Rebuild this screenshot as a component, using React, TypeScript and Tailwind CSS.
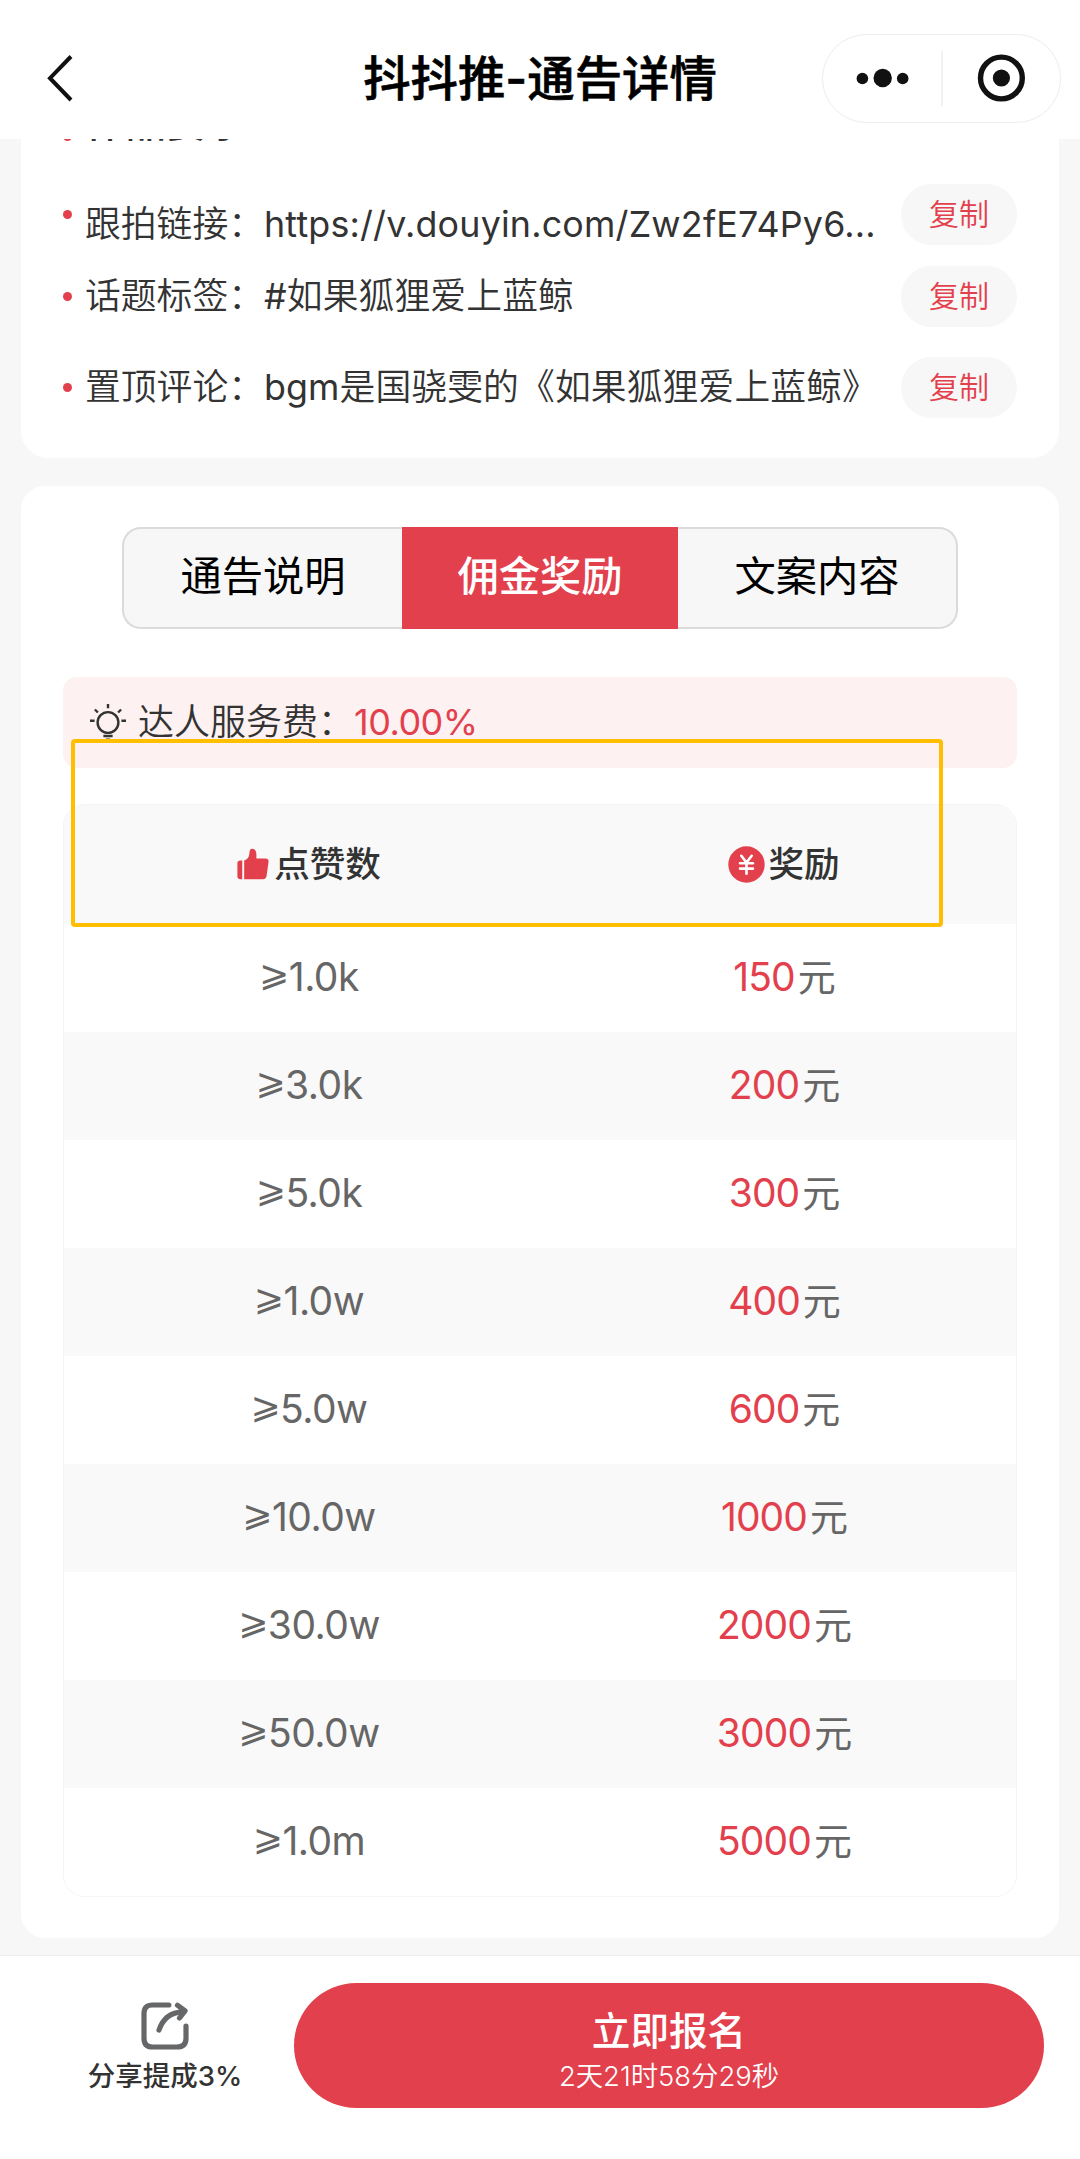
import { clsx } from 'clsx';

interface Requirement {
  label: string;
  latin: string;
  value: string;
  row: string;
  text: string;
}

const requirements: Requirement[] = [
  { label: '跟拍链接：', latin: 'https://v.douyin.com/Zw2fE74Py6...', value: '', row: 'mt-[32px]', text: 'mt-[20px] tracking-[0.2px]' },
  { label: '话题标签：', latin: '#', value: '如果狐狸爱上蓝鲸', row: 'mt-[21px]', text: 'mt-[1px] tracking-[0.1px]' },
  { label: '置顶评论：', latin: 'bgm', value: '是国骁雯的《如果狐狸爱上蓝鲸》', row: 'mt-[30px]', text: 'mt-[1px] tracking-[0.1px]' },
];

const rewards = [
  { likes: '1.0k', amount: 150 },
  { likes: '3.0k', amount: 200 },
  { likes: '5.0k', amount: 300 },
  { likes: '1.0w', amount: 400 },
  { likes: '5.0w', amount: 600 },
  { likes: '10.0w', amount: 1000 },
  { likes: '30.0w', amount: 2000 },
  { likes: '50.0w', amount: 3000 },
  { likes: '1.0m', amount: 5000 },
];

const tabs = ['通告说明', '佣金奖励', '文案内容'];

function Header() {
  return (
    <header className="relative z-10 flex h-[139px] items-center justify-center bg-white pt-[19px]">
      <svg className="absolute left-[46px] top-[53px] h-[50px] w-[30px]" viewBox="0 0 30 50" fill="none" stroke="#111" strokeWidth="4">
        <path d="M25 3.5 4 25.2 25 47" />
      </svg>
      <h1 className="text-[47.4px] leading-none font-medium text-black [-webkit-text-stroke:0.6px_#000]">抖抖推-通告详情</h1>
      <div className="absolute left-[822px] top-[34px] h-[89px] w-[239px] rounded-full border border-[#ededed]">
        <svg className="h-full w-full" viewBox="823 35 237 87" fill="#111">
          <circle cx="862.4" cy="78.5" r="5.8" />
          <circle cx="882.7" cy="78" r="9.2" />
          <circle cx="902.7" cy="78.5" r="5.8" />
          <path d="M941.5 51h1v55h-1z" fill="#e6e6e6" />
          <circle cx="1001.4" cy="78" r="8.6" />
          <circle cx="1001.4" cy="78" r="20.9" fill="none" stroke="#111" strokeWidth="5.4" />
        </svg>
      </div>
    </header>
  );
}

function RequirementCard() {
  return (
    <section className="-mt-[39px] ml-[21px] h-[358px] w-[1038px] rounded-b-[27px] bg-white px-[42px] text-[35.8px] text-[#333]">
      <div className="flex h-[52px] items-center">
        <i className="mt-[21px] h-[9px] w-[9px] rounded-full bg-[#e3404d]" />
        <span className="-mt-[7px] ml-[13px] text-[40.5px] leading-[40px] font-medium">作品要求</span>
      </div>
      {requirements.map((item) => (
        <div key={item.label} className={clsx('flex h-[61px] items-center', item.row)}>
          <i className="mt-[-1px] h-[9px] w-[9px] rounded-full bg-[#e3404d]" />
          <span className={clsx('ml-[13px] w-[816px] whitespace-nowrap leading-none', item.text)}>
            <span className="tracking-normal">{item.label}</span>
            <span className="font-normal">{item.latin}</span>
            {item.value}
          </span>
          <button className="h-[61px] w-[116px] shrink-0 rounded-full bg-[#f7f7f7] pb-[1px] text-[30px] leading-none text-[#e3404d]">复制</button>
        </div>
      ))}
    </section>
  );
}

function Tabs() {
  return (
    <div className="mx-auto flex h-[102px] w-[836px] rounded-[19px] bg-[#f7f7f7] text-[41.3px] font-normal text-black">
      {tabs.map((tab, i) => (
        <button
          key={tab}
          className={clsx(
            'flex items-center justify-center pb-[2px] leading-none',
            i === 0 && 'w-[280px] rounded-l-[19px] border-[2.5px] border-r-0 border-[#dcdada]',
            i === 1 && 'w-[276px] bg-[#e3404d] font-medium text-white',
            i === 2 && 'w-[280px] rounded-r-[19px] border-[2.5px] border-l-0 border-[#dcdada]',
          )}
        >
          {tab}
        </button>
      ))}
    </div>
  );
}

function BulbIcon() {
  return (
    <svg className="h-[38px] w-[38px]" viewBox="0 0 38 38" fill="none" stroke="#333" strokeWidth="2.4">
      <circle cx="19" cy="19.5" r="10.4" />
      <path d="M19 1v4.2M5.9 6.5l3 3M32.1 6.5l-3 3M1 17.7h4.6M32.4 17.7H37M14.4 33h9.2M16.8 36.6h4.4" />
    </svg>
  );
}

function ThumbIcon() {
  return (
    <svg className="-mt-[2px] h-[32px] w-[32px]" viewBox="0 0 33 32" fill="#e3404d">
      <path d="M5.4 12.4H3.6C1.4 12.4.4 13.4.4 15.6v13c0 2 1 3 3.2 3h1.8z" />
      <path d="M7.4 12.4c3.4-1.1 5-3.3 5.3-6.7.1-3.5.9-5.3 3-5.3 2.7 0 4.3 2.5 4.3 5.8v4.2h9.600c2.200 0 3.200 1.300 2.900 3.500l-2 14.500c-.3 2.100-1.500 3.200-3.700 3.200H7.400z" />
    </svg>
  );
}

function YuanIcon() {
  return (
    <svg className="-mt-[1px] h-[37px] w-[37px]" viewBox="0 0 37 37" fill="none">
      <circle cx="18.5" cy="18.5" r="18.2" fill="#e3404d" />
      <path d="m13.3 9.8 5.2 6.7 5.2-6.7M18.5 16.5v11.3M12 17.2h13M12 22.6h13" stroke="#fff" strokeWidth="2.6" strokeLinecap="round" strokeLinejoin="round" />
    </svg>
  );
}

function ShareIcon() {
  return (
    <svg className="h-[50px] w-[50px]" viewBox="0 0 50 50" fill="none" stroke="#666769" strokeWidth="5.2" strokeLinecap="round" strokeLinejoin="round">
      <path d="M28.8 4H12.5Q4 4 4 12.5v25Q4 46 12.5 46h24.4Q46 46 46 37.5V25" />
      <path d="M19 29C22.5 18.5 30 11.2 43 10.8" />
      <path d="M37.5 4.2 45 9.9 39.5 17" />
    </svg>
  );
}

function RewardTable() {
  return (
    <div className="relative mt-[36px] h-[1093px] overflow-hidden rounded-[22px] border border-[#f4f4f4] bg-white">
      <div className="grid h-[119px] grid-cols-[474px_474px] bg-[#f9f9f9] pl-[9px] text-[35.6px] leading-none font-medium text-[#333]">
        <div className="flex items-center justify-center gap-[5px] pr-[2px]">
          <ThumbIcon />
          点赞数
        </div>
        <div className="flex items-center justify-center gap-[3px]">
          <YuanIcon />
          奖励
        </div>
      </div>
      {rewards.map((r) => (
        <div key={r.likes} className="grid h-[108px] grid-cols-[474px_474px] pb-[3px] pl-[8px] text-[39px] leading-none font-normal text-[#666] even:bg-white odd:bg-[#f9f9f9]">
          <div className="flex items-center justify-center tracking-[-0.5px]">
            <span className="-mt-[6px] font-['DejaVu_Sans'] text-[36px]">⩾</span>
            {r.likes}
          </div>
          <div className="flex items-center justify-center pl-[3px]">
            <span className="mr-[3px] tracking-[-0.9px] text-[#e3404d]">{r.amount}</span>
            <span className="pt-[1px] text-[38px]">元</span>
          </div>
        </div>
      ))}
    </div>
  );
}

function Footer() {
  return (
    <footer className="flex h-[204px] border-t border-[#ececec] bg-white">
      <div className="ml-[64px] flex w-[202px] flex-col items-center pt-[45px]">
        <ShareIcon />
        <span className="mt-[12px] text-[27.5px] leading-none font-medium text-[#333]">分享提成3%</span>
      </div>
      <button className="mt-[27px] ml-[28px] flex h-[125px] w-[750px] flex-col items-center rounded-full bg-[#e3404d] text-white">
        <span className="mt-[29px] text-[38.6px] leading-none font-medium">立即报名</span>
        <span className="mt-[12px] text-[27.4px] leading-none">2天21时58分29秒</span>
      </button>
    </footer>
  );
}

export default function App() {
  return (
    <div className="flex h-[2159px] w-[1080px] flex-col overflow-hidden bg-[#f7f7f7] font-[Inter,'Noto_Sans_CJK_SC',sans-serif] font-[350]">
      <Header />
      <RequirementCard />
      <section className="mt-[28px] ml-[21px] h-[1452px] w-[1038px] rounded-[24px] bg-white px-[42px] pt-[41px]">
        <Tabs />
        <div className="relative mt-[48px] flex h-[91px] items-center rounded-[14px] bg-[#fdf1f1] pb-[1px] pl-[26px] text-[36px] leading-none text-[#333]">
          <BulbIcon />
          <span className="ml-[11px]">达人服务费：</span>
          <span className="font-normal tracking-[-0.5px] text-[#e3404d]">10.00%</span>
          {/* highlight frame around the table header */}
          <div className="absolute left-[8px] top-[62px] z-10 h-[188px] w-[872px] rounded-[4px] border-4 border-[#ffbf00]" />
        </div>
        <RewardTable />
      </section>
      <div className="h-[17px]" />
      <Footer />
    </div>
  );
}
